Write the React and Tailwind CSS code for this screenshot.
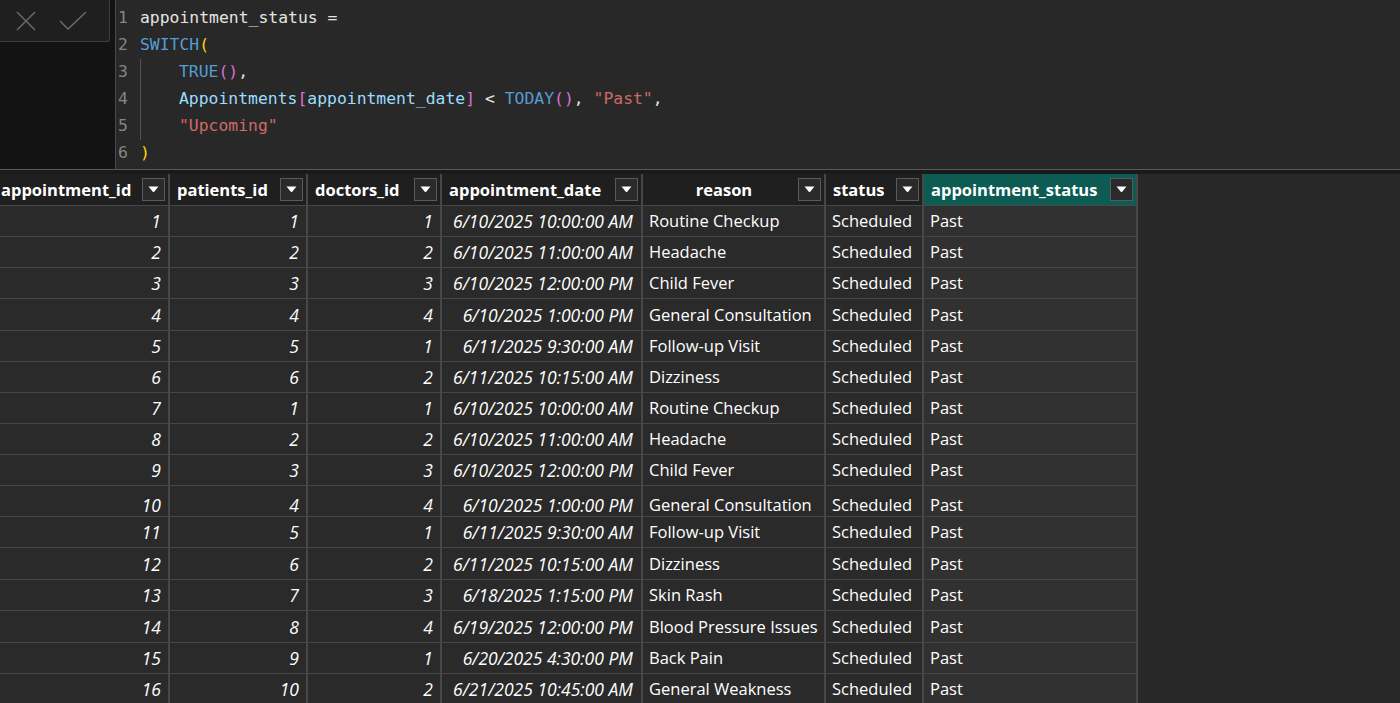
import React from "react";

const rows = [
  [1, 1, 1, "6/10/2025 10:00:00 AM", "Routine Checkup"],
  [2, 2, 2, "6/10/2025 11:00:00 AM", "Headache"],
  [3, 3, 3, "6/10/2025 12:00:00 PM", "Child Fever"],
  [4, 4, 4, "6/10/2025 1:00:00 PM", "General Consultation"],
  [5, 5, 1, "6/11/2025 9:30:00 AM", "Follow-up Visit"],
  [6, 6, 2, "6/11/2025 10:15:00 AM", "Dizziness"],
  [7, 1, 1, "6/10/2025 10:00:00 AM", "Routine Checkup"],
  [8, 2, 2, "6/10/2025 11:00:00 AM", "Headache"],
  [9, 3, 3, "6/10/2025 12:00:00 PM", "Child Fever"],
  [10, 4, 4, "6/10/2025 1:00:00 PM", "General Consultation"],
  [11, 5, 1, "6/11/2025 9:30:00 AM", "Follow-up Visit"],
  [12, 6, 2, "6/11/2025 10:15:00 AM", "Dizziness"],
  [13, 7, 3, "6/18/2025 1:15:00 PM", "Skin Rash"],
  [14, 8, 4, "6/19/2025 12:00:00 PM", "Blood Pressure Issues"],
  [15, 9, 1, "6/20/2025 4:30:00 PM", "Back Pain"],
  [16, 10, 2, "6/21/2025 10:45:00 AM", "General Weakness"],
];

// rows 4, 12 and 14 sit one pixel taller in the grid
const tallRows = [3, 11, 13];

const columns = [
  { name: "appointment_id" },
  { name: "patients_id" },
  { name: "doctors_id" },
  { name: "appointment_date" },
  { name: "reason", center: true },
  { name: "status" },
  { name: "appointment_status", active: true },
];

const Kw = ({ children }) => <span className="text-[#569cd6]">{children}</span>;
const Col = ({ children }) => <span className="text-[#9cdcfe]">{children}</span>;
const Pu = ({ children }) => <span className="text-[#da70d6]">{children}</span>;
const Go = ({ children }) => <span className="text-[#ffd700]">{children}</span>;
const Str = ({ children }) => <span className="text-[#d16969]">{children}</span>;

const CodeLine = ({ num, indent, children }) => (
  <div className="flex h-[27px] items-center">
    <div className="w-[24px] pl-[2px] text-[#858585]">{num}</div>
    {indent && <div className="w-[39px] self-stretch border-l border-[#525252]" />}
    <div className="whitespace-pre text-[#e4e4e4]">{children}</div>
  </div>
);

const FilterButton = () => (
  <div className="flex h-[23px] w-[23px] shrink-0 items-center justify-center border border-[#5a5a5a] bg-[#2a2a2a]">
    <svg width="11" height="7" viewBox="0 0 11 7">
      <path d="M0.5 0.5 H10.5 L6 6 H5 Z" fill="#ffffff" />
    </svg>
  </div>
);

const HeaderCell = ({ col }) => (
  <div
    className={`flex h-[32px] items-center border-r-2 border-b border-[#474747] pl-[7px] pr-[3px] ${
      col.active ? "bg-[#0c5c53]" : "bg-[#1f1f1f]"
    }`}
  >
    <div className={`flex-1 font-bold text-white ${col.center ? "text-center" : ""}`}>
      {col.name}
    </div>
    <FilterButton />
  </div>
);

export default function App() {
  return (
    <div
      className="flex h-[703px] w-[1400px] flex-col overflow-hidden bg-[#282828]"
      style={{ fontFamily: "'Open Sans', 'Noto Sans', sans-serif" }}
    >
      {/* formula bar */}
      <div className="flex h-[170px] shrink-0 border-b border-[#595959]">
        <div className="w-[115px] shrink-0 bg-[#131313]">
          <div className="flex h-[42px] w-[110px] items-center gap-[22px] rounded-br-[3px] border-r border-b border-[#3e3e3e] bg-[#1f1f1f] pl-[15px]">
            <svg width="22" height="22" viewBox="0 0 22 22">
              <path d="M2 2 L20 20 M20 2 L2 20" stroke="#6c6c6c" strokeWidth="1.4" fill="none" />
            </svg>
            <svg width="28" height="20" viewBox="0 0 28 20">
              <path d="M1 10 L9 18 L27 1" stroke="#6c6c6c" strokeWidth="1.4" fill="none" />
            </svg>
          </div>
        </div>
        <div
          className="flex-1 border-l border-[#4a4a4a] bg-[#282828] pt-[5px] text-[16.4px]"
          style={{ fontFamily: "'DejaVu Sans Mono', 'Liberation Mono', monospace" }}
        >
          <CodeLine num="1">appointment_status =</CodeLine>
          <CodeLine num="2">
            <Kw>SWITCH</Kw>
            <Go>(</Go>
          </CodeLine>
          <CodeLine num="3" indent>
            <Kw>TRUE</Kw>
            <Pu>()</Pu>,
          </CodeLine>
          <CodeLine num="4" indent>
            <Col>Appointments</Col>
            <Pu>[</Pu>
            <Col>appointment_date</Col>
            <Pu>]</Pu> {"< "}
            <Kw>TODAY</Kw>
            <Pu>()</Pu>, <Str>"Past"</Str>,
          </CodeLine>
          <CodeLine num="5" indent>
            <Str>"Upcoming"</Str>
          </CodeLine>
          <CodeLine num="6">
            <Go>)</Go>
          </CodeLine>
        </div>
      </div>
      <div className="h-[4px] shrink-0 bg-[#1a1a1a]" />

      {/* table */}
      <div className="-ml-[6px] grid w-[1144px] grid-cols-[176px_138px_134px_201px_183px_98px_214px] text-[16.5px] leading-[22px]">
        {columns.map((c) => (
          <HeaderCell key={c.name} col={c} />
        ))}
        {rows.map((r, i) => {
          const align = i === 9 ? "items-end" : "items-center";
          const h = tallRows.includes(i) ? "h-[32px]" : "h-[31px]";
          const base = `flex ${h} border-r-2 border-b border-[#474747] bg-[#2a2a2a] text-white ${align}`;
          return (
            <React.Fragment key={i}>
              <div className={`${base} justify-end pr-[7px] text-[17.5px] italic`}>{r[0]}</div>
              <div className={`${base} justify-end pr-[7px] text-[17.5px] italic`}>{r[1]}</div>
              <div className={`${base} justify-end pr-[7px] text-[17.5px] italic`}>{r[2]}</div>
              <div className={`${base} justify-end pr-[8px] text-[17.5px] italic`}>{r[3]}</div>
              <div className={`${base} pl-[6px]`}>{r[4]}</div>
              <div className={`${base} pl-[6px]`}>Scheduled</div>
              <div className={`flex ${h} border-r-2 border-b border-[#474747] bg-[#313131] pl-[6px] text-white ${align}`}>
                Past
              </div>
            </React.Fragment>
          );
        })}
      </div>
    </div>
  );
}
